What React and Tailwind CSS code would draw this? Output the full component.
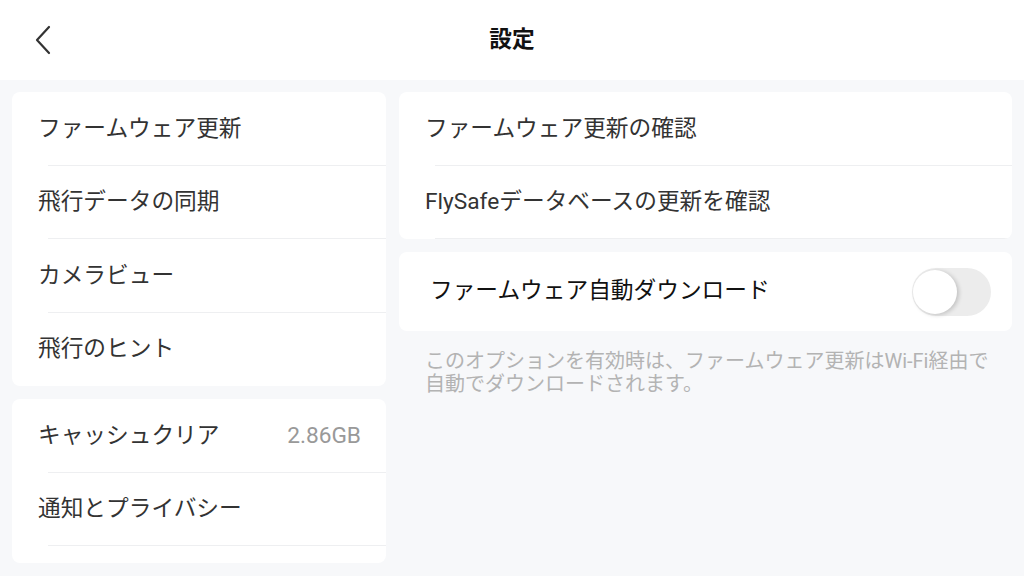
import React, { useState } from 'react';

const FONT = { fontFamily: 'Roboto, "Noto Sans CJK JP", sans-serif' };

const Row = ({ label, value, divider = true }) => (
  <div className="relative h-[73.5px] flex items-center justify-between pl-[26px] pr-[25px]">
    <span className="text-[22.7px] text-[#333333]">{label}</span>
    {value && <span className="text-[22.7px] text-[#999999]">{value}</span>}
    {divider && <div className="absolute left-[36px] right-0 bottom-0 h-px bg-[#eeeff1]" />}
  </div>
);

const Toggle = ({ on, onChange }) => (
  <button
    onClick={() => onChange(!on)}
    className={`relative w-[79px] h-[48px] rounded-full ${on ? 'bg-[#2f80ed]' : 'bg-[#ececec]'}`}
  >
    <span
      className={`absolute top-[2px] w-[44px] h-[44px] rounded-full bg-white shadow-[2px_1px_4px_rgba(0,0,0,0.18)] ${on ? 'left-[33px]' : 'left-[1px]'}`}
    />
  </button>
);

export default function App() {
  const [autoDownload, setAutoDownload] = useState(false);

  return (
    <div className="w-[1024px] h-[576px] overflow-hidden bg-[#f7f8fa] flex flex-col" style={FONT}>
      {/* Header */}
      <div className="relative h-[80px] bg-white flex items-center justify-center shrink-0">
        <button className="absolute left-[32px] top-[25px] w-[22px] h-[30px] flex items-center justify-center">
          <svg width="18" height="30" viewBox="0 0 18 30" fill="none">
            <path d="M15 2 L3 15 L15 28" stroke="#333333" strokeWidth="2.2" strokeLinecap="round" strokeLinejoin="round" />
          </svg>
        </button>
        <h1 className="text-[22.7px] font-bold text-[#111111]">設定</h1>
      </div>

      {/* Body */}
      <div className="flex gap-[13px] px-[12px] pt-[12px]">
        {/* Left menu */}
        <div className="w-[374px] flex flex-col gap-[13px] shrink-0">
          <div className="bg-white rounded-[8px] overflow-hidden">
            <Row label="ファームウェア更新" />
            <Row label="飛行データの同期" />
            <Row label="カメラビュー" />
            <Row label="飛行のヒント" divider={false} />
          </div>
          <div className="bg-white rounded-[8px] overflow-hidden pb-[17px]">
            <Row label="キャッシュクリア" value="2.86GB" />
            <Row label="通知とプライバシー" />
          </div>
        </div>

        {/* Right detail */}
        <div className="flex-1 flex flex-col">
          <div className="bg-white rounded-[8px] overflow-hidden">
            <Row label="ファームウェア更新の確認" />
            <Row label="FlySafeデータベースの更新を確認" />
          </div>
          <div className="mt-[13px] bg-white rounded-[8px] h-[79px] flex items-center justify-between pl-[31px] pr-[21px]">
            <span className="text-[22.7px] text-[#111111]">ファームウェア自動ダウンロード</span>
            <Toggle on={autoDownload} onChange={setAutoDownload} />
          </div>
          <p className="mt-[19px] pl-[26px] text-[20px] leading-[23px] text-[#b3b3b3]">
            このオプションを有効時は、ファームウェア更新はWi-Fi経由で
            <br />
            自動でダウンロードされます。
          </p>
        </div>
      </div>
    </div>
  );
}
